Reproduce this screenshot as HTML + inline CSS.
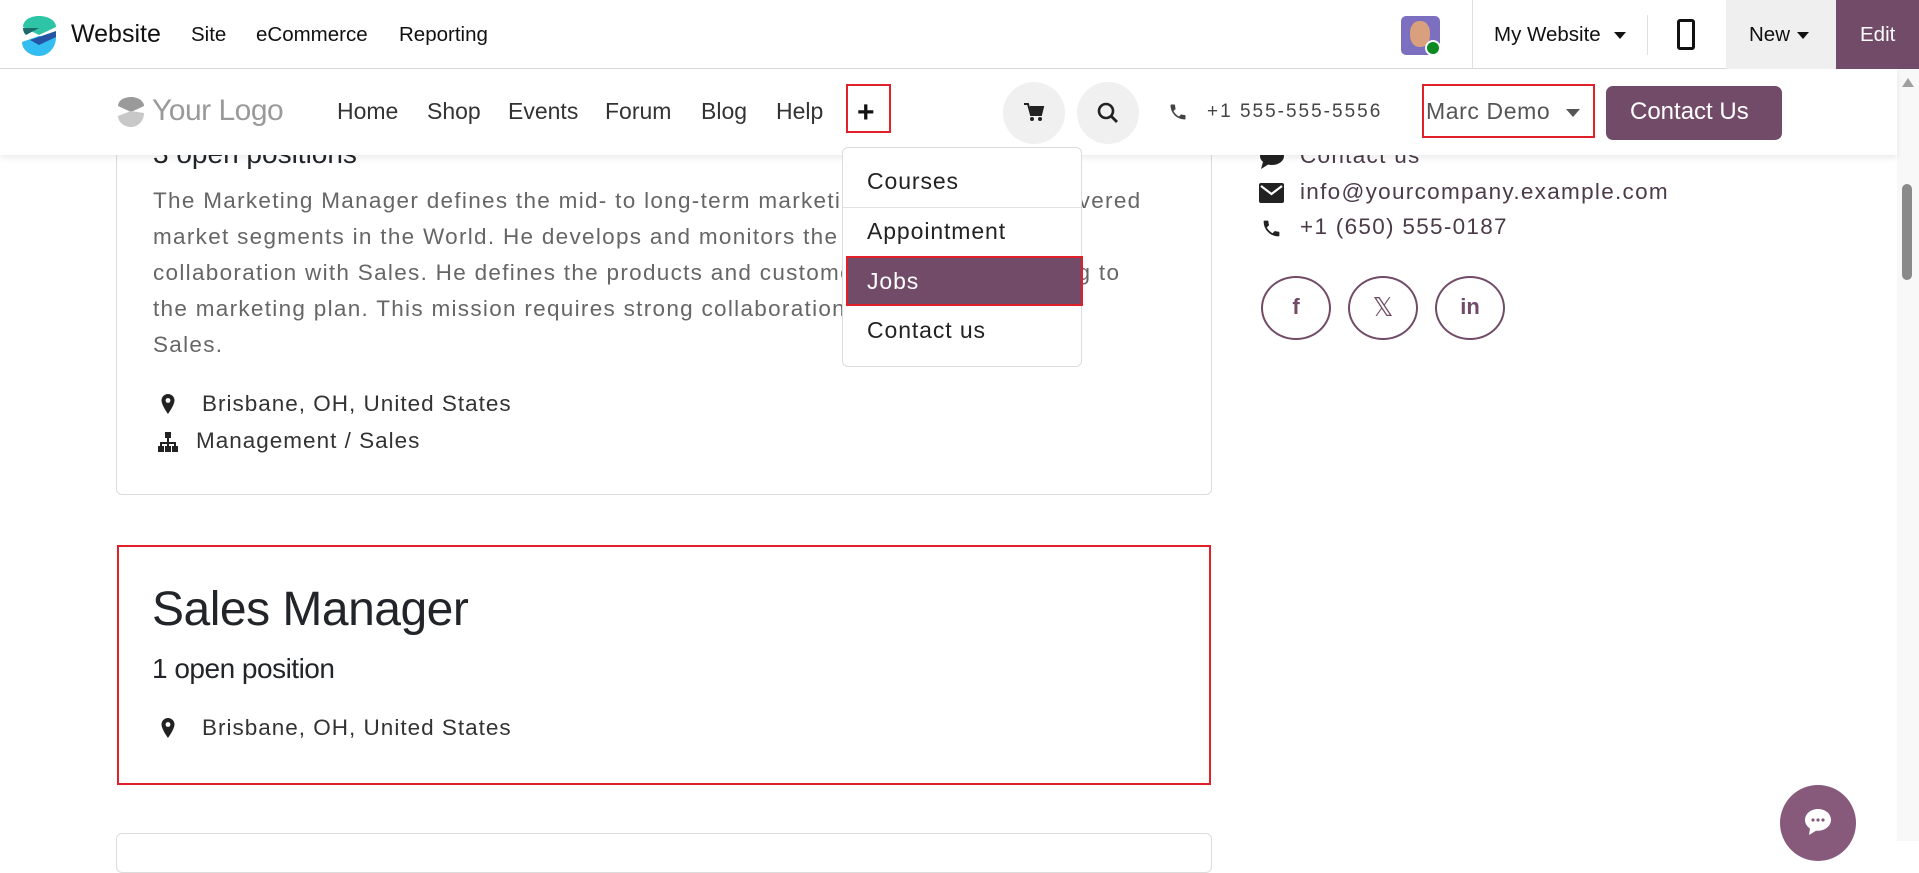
<!DOCTYPE html>
<html><head><meta charset="utf-8"><style>
*{margin:0;padding:0;box-sizing:border-box}
body{width:1919px;height:841px;overflow:hidden;background:#fff;font-family:"Liberation Sans",sans-serif;position:relative;color:#212529}
.a{position:absolute;white-space:nowrap}
.top{position:absolute;left:0;top:0;width:1919px;height:69px;background:#fff;border-bottom:1px solid #d8d8d8;z-index:5}
.nav{position:absolute;left:0;top:69px;width:1897px;height:86px;background:#fff;box-shadow:0 3px 6px rgba(0,0,0,.08);z-index:4}
.card{position:absolute;border:1px solid #dcdcdc;border-radius:6px;background:#fff}
.p{color:#666;font-size:22.5px;line-height:36px;letter-spacing:1.3px}
.rc{color:#4b3a48;font-size:22.5px;letter-spacing:1.3px}
.loc{font-size:22.5px;color:#333;letter-spacing:1px}
.soc{position:absolute;top:276px;width:70px;height:64px;border:2.5px solid #714b67;border-radius:50%;text-align:center;line-height:58px;font-weight:bold;color:#714b67;font-size:22px}
.dd{font-size:23px;letter-spacing:.9px}
</style></head><body>

<!-- content -->
<div class="card" style="left:116px;top:100px;width:1096px;height:395px"></div>
<div class="a" style="left:153px;top:138px;font-size:28px;z-index:1">3 open positions</div>
<div class="a p" style="left:153px;top:183px;">The Marketing Manager defines the mid- to long-term marketing strategy for his covered<br>market segments in the World. He develops and monitors the annual budget in<br>collaboration with Sales. He defines the products and customers portfolio according to<br>the marketing plan. This mission requires strong collaboration with Finance and<br>Sales.</div>
<svg class="a" style="left:160px;top:393px" width="16" height="22" viewBox="0 0 16 22"><path d="M8 1a6.5 6.5 0 0 0-6.5 6.5C1.5 12 8 21 8 21s6.5-9 6.5-13.5A6.5 6.5 0 0 0 8 1z" fill="#222"/><circle cx="8" cy="7.5" r="2.4" fill="#fff"/></svg>
<div class="a loc" style="left:202px;top:391px">Brisbane, OH, United States</div>
<svg class="a" style="left:157px;top:431px" width="22" height="22" viewBox="0 0 22 22" fill="#222"><rect x="8" y="1" width="6" height="6"/><rect x="1" y="15" width="6" height="6"/><rect x="8" y="15" width="6" height="6"/><rect x="15" y="15" width="6" height="6"/><path d="M10 7h2v4h7v4h-2v-2H12v2h-2v-2H5v2H3v-4h7z"/></svg>
<div class="a loc" style="left:196px;top:428px">Management / Sales</div>

<div class="card" style="left:117px;top:545px;width:1094px;height:240px;border:2.5px solid #e0212b;border-radius:0"></div>
<div class="a" style="left:152px;top:582px;font-size:48px;letter-spacing:-.5px">Sales Manager</div>
<div class="a" style="left:152px;top:653px;font-size:28px;letter-spacing:-.5px">1 open position</div>
<svg class="a" style="left:160px;top:717px" width="16" height="22" viewBox="0 0 16 22"><path d="M8 1a6.5 6.5 0 0 0-6.5 6.5C1.5 12 8 21 8 21s6.5-9 6.5-13.5A6.5 6.5 0 0 0 8 1z" fill="#222"/><circle cx="8" cy="7.5" r="2.4" fill="#fff"/></svg>
<div class="a loc" style="left:202px;top:715px">Brisbane, OH, United States</div>
<div class="card" style="left:116px;top:833px;width:1096px;height:40px"></div>

<!-- right column -->
<svg class="a" style="left:1259px;top:146px" width="26" height="24" viewBox="0 0 26 24"><ellipse cx="13" cy="10" rx="12" ry="9" fill="#222"/><path d="M4 16l-2 7 8-5z" fill="#222"/></svg>
<div class="a rc" style="left:1300px;top:143px">Contact us</div>
<svg class="a" style="left:1259px;top:183px" width="25" height="20" viewBox="0 0 25 20"><rect width="25" height="20" rx="2" fill="#222"/><path d="M2 3l10.5 8L23 3" stroke="#fff" stroke-width="2.2" fill="none"/></svg>
<div class="a rc" style="left:1300px;top:179px">info@yourcompany.example.com</div>
<svg class="a" style="left:1261px;top:218px" width="21" height="21" viewBox="0 0 24 24"><path d="M6.6 10.8a15 15 0 0 0 6.6 6.6l2.2-2.2c.3-.3.7-.4 1-.2 1.1.4 2.3.6 3.6.6.6 0 1 .4 1 1V20c0 .6-.4 1-1 1A17 17 0 0 1 3 4c0-.6.4-1 1-1h3.5c.6 0 1 .4 1 1 0 1.3.2 2.5.6 3.6.1.3 0 .7-.2 1z" fill="#222"/></svg>
<div class="a rc" style="left:1300px;top:214px">+1 (650) 555-0187</div>
<div class="soc" style="left:1261px">f</div>
<div class="soc" style="left:1348px;font-weight:normal;font-size:26px">𝕏</div>
<div class="soc" style="left:1435px">in</div>

<!-- chat bubble -->
<div class="a" style="left:1780px;top:785px;width:76px;height:76px;border-radius:50%;background:#875a7b"></div>
<svg class="a" style="left:1802px;top:806px" width="32" height="32" viewBox="0 0 32 32"><path d="M16 3C8.8 3 3 8 3 14c0 3.5 2 6.6 5 8.6L7 29l7-4.3c.7.1 1.3.1 2 .1 7.2 0 13-5 13-11S23.2 3 16 3z" fill="#fff"/><circle cx="11" cy="14" r="1.6" fill="#875a7b"/><circle cx="16" cy="14" r="1.6" fill="#875a7b"/><circle cx="21" cy="14" r="1.6" fill="#875a7b"/></svg>

<!-- scrollbar -->
<div class="a" style="left:1897px;top:69px;width:22px;height:772px;background:#f8f8f8"></div>
<div class="a" style="left:1902px;top:78px;width:0;height:0;border-left:6px solid transparent;border-right:6px solid transparent;border-bottom:9px solid #a0a0a0"></div>
<div class="a" style="left:1902px;top:184px;width:10px;height:96px;border-radius:5px;background:#8a8a8a"></div>

<!-- top bar -->
<div class="top">
<svg class="a" style="left:20px;top:15px" width="39" height="42" viewBox="0 0 39 42"><path d="M19 1C9 1 3 6 3 12l16 8 17-8C36 6 29 1 19 1z" fill="#2ec4a6"/><path d="M3 13c0 3 1 5 3 7l13-7z" fill="#1e6b6b"/><path d="M36 22c0 11-8 19-17 19S2 35 2 27l17-6z" fill="#33bdf0"/><path d="M36 22L19 30l-9-5 26-9z" fill="#2455a4"/></svg>
<div class="a" style="left:71px;top:20px;font-size:25px;color:#111">Website</div>
<div class="a" style="left:191px;top:23px;font-size:20.5px;color:#111">Site</div>
<div class="a" style="left:256px;top:23px;font-size:20.5px;color:#111">eCommerce</div>
<div class="a" style="left:399px;top:23px;font-size:20.5px;color:#111">Reporting</div>
<div class="a" style="left:1401px;top:16px;width:39px;height:39px;border-radius:5px;background:#7c6fc0"></div>
<div class="a" style="left:1410px;top:21px;width:20px;height:26px;border-radius:45%;background:#d9a07e"></div>
<div class="a" style="left:1425px;top:40px;width:16px;height:16px;border-radius:50%;background:#0a8a20;border:2px solid #fff"></div>
<div class="a" style="left:1472px;top:0;width:1px;height:69px;background:#e0e0e0"></div>
<div class="a" style="left:1494px;top:23px;font-size:20.5px;color:#111">My Website</div>
<div class="a" style="left:1614px;top:32px;border-left:6px solid transparent;border-right:6px solid transparent;border-top:7px solid #111"></div>
<div class="a" style="left:1647px;top:15px;width:1px;height:40px;background:#e0e0e0"></div>
<div class="a" style="left:1677px;top:19px;width:18px;height:31px;border:3px solid #111;border-radius:3px"></div>
<div class="a" style="left:1726px;top:0;width:110px;height:69px;background:#efefef"></div>
<div class="a" style="left:1749px;top:23px;font-size:20.5px;color:#111">New</div>
<div class="a" style="left:1797px;top:32px;border-left:6px solid transparent;border-right:6px solid transparent;border-top:7px solid #111"></div>
<div class="a" style="left:1836px;top:0;width:83px;height:69px;background:#714b67"></div>
<div class="a" style="left:1860px;top:23px;font-size:20.5px;color:#fff">Edit</div>
</div>

<!-- nav -->
<div class="nav">
<svg class="a" style="left:116px;top:27px" width="30" height="32" viewBox="0 0 30 32"><path d="M15 1C7 1 2 5 2 10l13 6 13-6c0-5-6-9-13-9z" fill="#9a9a9a"/><path d="M28 17c0 8-6 14-13 14S2 26 2 20l13-5z" fill="#c8c8c8"/></svg>
<div class="a" style="left:152px;top:25px;font-size:30px;color:#9a9a9a;letter-spacing:-.5px">Your Logo</div>
<div class="a" style="left:337px;top:29px;font-size:23px;color:#333">Home</div>
<div class="a" style="left:427px;top:29px;font-size:23px;color:#333">Shop</div>
<div class="a" style="left:508px;top:29px;font-size:23px;color:#333">Events</div>
<div class="a" style="left:605px;top:29px;font-size:23px;color:#333">Forum</div>
<div class="a" style="left:701px;top:29px;font-size:23px;color:#333">Blog</div>
<div class="a" style="left:776px;top:29px;font-size:23px;color:#333">Help</div>
<div class="a" style="left:846px;top:15px;width:45px;height:49px;border:2.5px solid #e0212b"></div>
<div class="a" style="left:857px;top:27px;font-size:30px;color:#111;font-weight:bold">+</div>
<div class="a" style="left:1003px;top:13px;width:62px;height:62px;border-radius:50%;background:#f0f0f0"></div>
<svg class="a" style="left:1023px;top:33px" width="22" height="22" viewBox="0 0 22 22" fill="#222"><path d="M1 2h4l3 11h10l2-8H7" stroke="#222" stroke-width="2" fill="none"/><rect x="7" y="6" width="12" height="6"/><circle cx="9" cy="17" r="2"/><circle cx="17" cy="17" r="2"/></svg>
<div class="a" style="left:1077px;top:13px;width:62px;height:62px;border-radius:50%;background:#f0f0f0"></div>
<svg class="a" style="left:1096px;top:32px" width="24" height="24" viewBox="0 0 24 24"><circle cx="10" cy="10" r="7" stroke="#222" stroke-width="2.6" fill="none"/><path d="M15 15l6 6" stroke="#222" stroke-width="2.8"/></svg>
<svg class="a" style="left:1168px;top:33px" width="20" height="20" viewBox="0 0 24 24"><path d="M6.6 10.8a15 15 0 0 0 6.6 6.6l2.2-2.2c.3-.3.7-.4 1-.2 1.1.4 2.3.6 3.6.6.6 0 1 .4 1 1V20c0 .6-.4 1-1 1A17 17 0 0 1 3 4c0-.6.4-1 1-1h3.5c.6 0 1 .4 1 1 0 1.3.2 2.5.6 3.6.1.3 0 .7-.2 1z" fill="#444"/></svg>
<div class="a" style="left:1207px;top:32px;font-size:19px;color:#444;letter-spacing:2px">+1 555-555-5556</div>
<div class="a" style="left:1422px;top:15px;width:173px;height:54px;border:2.5px solid #e0212b"></div>
<div class="a" style="left:1426px;top:29px;font-size:23px;color:#555;letter-spacing:.6px">Marc Demo</div>
<div class="a" style="left:1566px;top:40px;border-left:7px solid transparent;border-right:7px solid transparent;border-top:8px solid #555"></div>
<div class="a" style="left:1606px;top:17px;width:176px;height:54px;border-radius:7px;background:#714b67"></div>
<div class="a" style="left:1630px;top:29px;font-size:24px;color:#fff">Contact Us</div>
</div>

<!-- dropdown -->
<div class="a" style="left:842px;top:147px;width:240px;height:220px;background:#fff;border:1px solid #dcdcdc;border-radius:6px;z-index:6">
<div class="a dd" style="left:24px;top:20px;color:#222">Courses</div>
<div class="a" style="left:0;top:59px;width:238px;height:1px;background:#e2e2e2"></div>
<div class="a dd" style="left:24px;top:70px;color:#222">Appointment</div>
<div class="a" style="left:3px;top:108px;width:237px;height:50px;background:#714b67;border:2.5px solid #e0212b"></div>
<div class="a dd" style="left:24px;top:120px;color:#fff">Jobs</div>
<div class="a dd" style="left:24px;top:169px;color:#222">Contact us</div>
</div>
</body></html>
